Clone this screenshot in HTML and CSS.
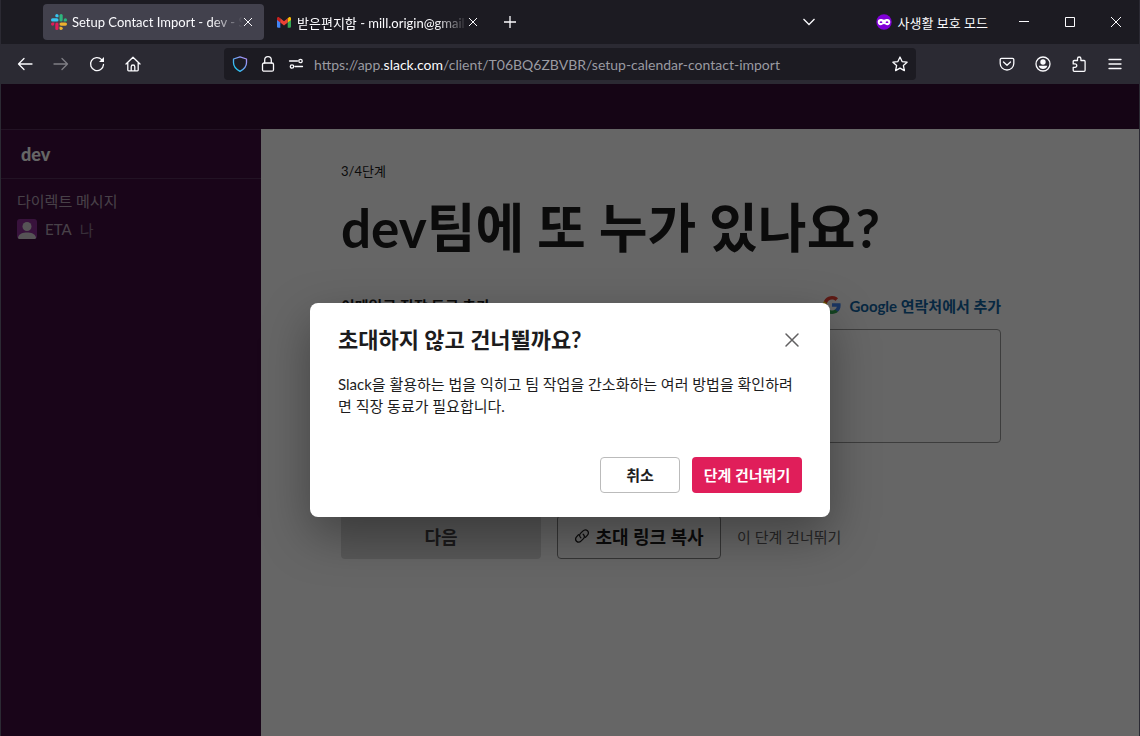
FILE: index.html
```html
<!DOCTYPE html>
<html lang="ko">
<head>
<meta charset="utf-8">
<meta name="viewport" content="width=device-width, initial-scale=1">
<title>Setup Contact Import - dev - Slack</title>
<link rel="stylesheet" href="styles.css">
</head>
<body>
<div class="window">
  <header class="tabbar">
    <div class="tab tab-active">
      <svg class="favicon" viewBox="0 0 16 16" aria-hidden="true">
        <g fill="#36c5f0"><path d="M5.9 0a1.6 1.6 0 0 0 0 3.3h1.6V1.6A1.6 1.6 0 0 0 5.9 0z"/><rect x="0" y="4.3" width="7.5" height="3.2" rx="1.6"/></g>
        <g fill="#2eb67d"><path d="M16 5.9a1.6 1.6 0 0 0-3.3 0v1.6h1.7A1.6 1.6 0 0 0 16 5.9z"/><rect x="8.5" y="0" width="3.2" height="7.5" rx="1.6"/></g>
        <g fill="#ecb22e"><path d="M10.1 16a1.6 1.6 0 0 0 0-3.3H8.5v1.7a1.6 1.6 0 0 0 1.6 1.6z"/><rect x="8.5" y="8.5" width="7.5" height="3.2" rx="1.6"/></g>
        <g fill="#e01e5a"><path d="M0 10.1a1.6 1.6 0 0 0 3.3 0V8.5H1.6A1.6 1.6 0 0 0 0 10.1z"/><rect x="4.3" y="8.5" width="3.2" height="7.5" rx="1.6"/></g>
      </svg>
      <span class="tab-title">Setup Contact Import - dev - S</span>
      <button class="tab-close" aria-label="탭 닫기"><svg viewBox="0 0 10 10"><path d="M1 1l8 8M9 1l-8 8"/></svg></button>
    </div>
    <div class="tab">
      <svg class="favicon gmail" viewBox="0 0 16 16" aria-hidden="true">
        <path fill="#4285f4" d="M1 4v8.5A1.2 1.2 0 0 0 2.2 13.700H4.300V6z"/>
        <path fill="#34a853" d="M15 4v8.500a1.200 1.200 0 0 1-1.200 1.200H11.700V6z"/>
        <path fill="#fbbc04" d="M11.700 4.500l1-1.100c1-.9 2.300-.3 2.300 1V6l-3.300 2.600z"/>
        <path fill="#c5221f" d="M4.300 4.500l-1-1.100C2.300 2.500 1 3.100 1 4.400V6l3.300 2.600z"/>
        <path fill="#ea4335" d="M4.300 4.300L8 7.200l3.700-2.900v4.300L8 11.500 4.300 8.600z"/>
      </svg>
      <span class="tab-title">받은편지함 - mill.origin@gmail</span>
      <button class="tab-close" aria-label="탭 닫기"><svg viewBox="0 0 10 10"><path d="M1 1l8 8M9 1l-8 8"/></svg></button>
    </div>
    <button class="tab-new" aria-label="새 탭"><svg viewBox="0 0 12 12"><path d="M6 0v12M0 6h12"/></svg></button>
    <div class="tabbar-end">
      <button class="tab-list" aria-label="모든 탭 보기"><svg viewBox="0 0 16 16"><path d="M2.500 5l5.500 5.500L13.500 5"/></svg></button>
      <span class="private">
        <svg viewBox="0 0 16 16" aria-hidden="true"><circle cx="8" cy="8" r="7.700" fill="#8000d7"/><path fill="#fff" fill-rule="evenodd" d="M4.700 5C2.900 5 1.700 6.200 1.700 8s1.200 3.200 3 3.200c1.400 0 2.200-1.200 3.300-1.200s1.900 1.200 3.300 1.200c1.800 0 3-1.400 3-3.200s-1.200-3-3-3C10 5 9.200 5.700 8 5.700S6 5 4.700 5zM3.500 8.200c.8-1.400 2.200-1.400 3 0-.8 1.200-2.200 1.200-3 0zm6 0c.8-1.400 2.200-1.400 3 0-.8 1.200-2.200 1.200-3 0z"/></svg>
        사생활 보호 모드
      </span>
      <div class="window-controls">
        <button aria-label="최소화"><svg viewBox="0 0 10 10"><path d="M0 4.500h10"/></svg></button>
        <button aria-label="최대화"><svg viewBox="0 0 10 10"><path d="M.5.5h9v9h-9z"/></svg></button>
        <button aria-label="닫기"><svg viewBox="0 0 10 10"><path d="M0 0l10 10M10 0L0 10"/></svg></button>
      </div>
    </div>
  </header>

  <nav class="toolbar" aria-label="탐색 도구">
    <div class="nav-buttons">
      <button aria-label="뒤로"><svg viewBox="0 0 16 16"><path d="M15 8H1.500M7 2.500L1.500 8 7 13.500"/></svg></button>
      <button class="dim" aria-label="앞으로"><svg viewBox="0 0 16 16"><path d="M1 8h13.500M9 2.500L14.500 8 9 13.500"/></svg></button>
      <button aria-label="새로 고침"><svg viewBox="0 0 16 16"><path d="M14.500 8.500A6.500 6.500 0 1 1 12.700 3.600"/><path class="solid" d="M15 1v5h-5z"/></svg></button>
      <button aria-label="홈"><svg viewBox="0 0 16 16"><path d="M1 8l7-6.800L15 8M2.800 6.700V14a.8.800 0 0 0 .8.800h8.800a.8.800 0 0 0 .8-.8V6.700M6.200 14.800v-4a1.800 1.800 0 0 1 3.600 0v4"/></svg></button>
    </div>
    <div class="urlbar">
      <svg class="shield" viewBox="0 0 16 16" aria-hidden="true"><defs><linearGradient id="shield-tint" x1="0" y1="1" x2="1" y2="0"><stop offset="0" stop-color="#00d5ef"/><stop offset=".5" stop-color="#6ba5f5"/><stop offset="1" stop-color="#b58ef8"/></linearGradient></defs><path stroke="url(#shield-tint)" d="M8 .8L14.500 3v3.800c0 4-2.500 6.500-6.500 8.600C4 13.300 1.500 10.800 1.500 6.800V3z"/></svg>
      <svg viewBox="0 0 16 16" aria-hidden="true"><rect x="2.500" y="7" width="11" height="8.200" rx="1.500"/><path d="M4.700 7V4a3.300 3.300 0 0 1 6.600 0v3"/></svg>
      <svg viewBox="0 0 16 16" aria-hidden="true"><path d="M1.500 5H9.500M7 10.500h7.500"/><circle cx="12.500" cy="5" r="1.700"/><circle cx="4" cy="10.500" r="1.700"/></svg>
      <a class="url" href="#">https://app.<b>slack.com</b>/client/T06BQ6ZBVBR/setup-calendar-contact-import</a>
      <button aria-label="북마크 추가"><svg viewBox="0 0 16 16"><path d="M8 1l2.100 4.600 5 .6-3.700 3.400 1 5L8 12.100l-4.400 2.500 1-5L.9 6.200l5-.6z"/></svg></button>
    </div>
    <div class="tool-buttons">
      <button aria-label="Pocket"><svg viewBox="0 0 16 16"><path d="M2.500 2.300h11a1.300 1.300 0 0 1 1.300 1.300V7.500a6.800 6.500 0 0 1-13.600 0V3.600a1.300 1.300 0 0 1 1.300-1.300zM4.500 6L8 9.300 11.500 6"/></svg></button>
      <button aria-label="계정"><svg viewBox="0 0 16 16"><circle cx="8" cy="8" r="7"/><circle class="solid" cx="8" cy="6" r="2.700"/><path class="solid" d="M3.700 9.800h8.600C11.800 12 10 13 8 13s-3.800-1-4.300-3.200z"/></svg></button>
      <button aria-label="확장 기능"><svg viewBox="0 0 16 16"><path d="M6.500 4.500V2.700a1.700 1.700 0 0 1 3.400 0v1.800h3.200a1 1 0 0 1 1 1v8.800a1 1 0 0 1-1 1H3.200a1 1 0 0 1-1-1v-3h1.900a1.700 1.700 0 0 0 0-3.400H2.200v-2.400a1 1 0 0 1 1-1z"/></svg></button>
      <button aria-label="메뉴"><svg viewBox="0 0 16 16"><path d="M2 3.500h12M2 8h12M2 12.500h12"/></svg></button>
    </div>
  </nav>

  <div class="client">
    <div class="client-top"></div>
    <aside class="sidebar">
      <div class="workspace">dev</div>
      <div class="dm-heading">다이렉트 메시지</div>
      <a class="dm" href="#">
        <svg viewBox="0 0 20 20" aria-hidden="true"><rect width="20" height="20" rx="3" fill="#8d2f96"/><circle cx="10" cy="7.500" r="4.500" fill="#d6d3d6"/><path fill="#d6d3d6" d="M1 18.500C2 14.500 6 13.500 10 13.500s8 1 9 5c0 1-1 1.500-2 1.500H3c-1 0-2-.5-2-1.500z"/></svg>
        <span>ETA</span><span class="me">나</span>
      </a>
    </aside>
    <main class="setup">
      <p class="step">3/4단계</p>
      <h1>dev팀에 또 누가 있나요?</h1>
      <form class="invite">
        <div class="field-head">
          <label for="emails">이메일로 직장 동료 추가</label>
          <a class="google" href="#">
            <svg viewBox="0 0 18 18" aria-hidden="true"><path fill="#4285f4" d="M17.640 9.200c0-.64-.06-1.250-.16-1.840H9v3.480h4.840a4.140 4.140 0 0 1-1.800 2.720v2.260h2.920c1.700-1.570 2.680-3.880 2.680-6.620z"/><path fill="#34a853" d="M9 18c2.430 0 4.470-.8 5.960-2.180l-2.920-2.260c-.8.540-1.840.860-3.040.860-2.340 0-4.330-1.580-5.040-3.710H.96v2.330A9 9 0 0 0 9 18z"/><path fill="#fbbc05" d="M3.960 10.710a5.400 5.400 0 0 1 0-3.420V4.960H.96a9 9 0 0 0 0 8.080z"/><path fill="#ea4335" d="M9 3.580c1.320 0 2.510.45 3.440 1.350l2.580-2.590A9 9 0 0 0 .96 4.960l3 2.330C4.670 5.160 6.660 3.580 9 3.580z"/></svg>
            Google 연락처에서 추가
          </a>
        </div>
        <textarea id="emails"></textarea>
        <div class="actions">
          <button class="next" type="button">다음</button>
          <button class="copy" type="button"><svg viewBox="0 0 16 16" aria-hidden="true"><path d="M6.800 9.700C5.300 8.300 5.200 6.700 6.500 5.400l2.300-2.300c1.500-1.500 3.400-1.500 4.700-.3s1.200 3.200-.2 4.600L11.500 9.200"/><path d="M9.200 6.300c1.500 1.400 1.600 3 .3 4.300l-2.300 2.300c-1.500 1.500-3.400 1.500-4.700.3s-1.200-3.200.2-4.600L4.500 6.800"/></svg>초대 링크 복사</button>
          <a class="skip" href="#">이 단계 건너뛰기</a>
        </div>
      </form>
    </main>

    <div class="overlay">
      <section class="modal" role="dialog" aria-modal="true" aria-labelledby="modal-title">
        <div class="modal-head">
          <h2 id="modal-title">초대하지 않고 건너뛸까요?</h2>
          <button aria-label="닫기"><svg viewBox="0 0 16 16"><path d="M2 2l12 12M14 2L2 14"/></svg></button>
        </div>
        <p>Slack을 활용하는 법을 익히고 팀 작업을 간소화하는 여러 방법을 확인하려면 직장 동료가 필요합니다.</p>
        <div class="modal-actions">
          <button class="cancel">취소</button>
          <button class="confirm">단계 건너뛰기</button>
        </div>
      </section>
    </div>
  </div>
</div>
</body>
</html>
```
FILE: styles.css
```css
* { box-sizing: border-box; }
body {
  margin: 0;
  font-family: Lato, "Noto Sans CJK KR", sans-serif;
  color: #1d1c1d;
}
button {
  margin: 0;
  padding: 0;
  border: 0;
  background: none;
  color: inherit;
  font: inherit;
  cursor: pointer;
}
a { color: inherit; text-decoration: none; }
h1, h2, p { margin: 0; }
svg { display: block; flex: none; }

.window {
  min-height: 100vh;
  display: flex;
  flex-direction: column;
  border: solid #2b2a33;
  border-width: 0 1px;
}

/* Tab strip */
.tabbar {
  display: flex;
  align-items: center;
  height: 44px;
  padding-left: 42px;
  background: #1c1b22;
  color: #fbfbfe;
  font-size: 13px;
}
.tabbar button svg, .toolbar svg {
  fill: none;
  stroke: currentColor;
}
.tab {
  display: flex;
  align-items: center;
  width: 221px;
  height: 36px;
  padding: 0 11px 0 8px;
  border-radius: 4px;
}
.tab + .tab { margin-left: 4px; }
.tab-active { background: #42414d; }
.favicon { width: 16px; height: 16px; }
.tab-title {
  flex: 1;
  min-width: 0;
  margin-left: 5px;
  overflow: hidden;
  white-space: nowrap;
  mask-image: linear-gradient(to left, transparent, #000 32px);
}
.tab-close svg { width: 10px; height: 10px; }
.tab-new { margin-left: 15px; }
.tab-new svg { width: 12px; height: 12px; stroke-width: 1.3; }
.tabbar-end {
  display: flex;
  align-items: center;
  margin-left: auto;
}
.tab-list svg { width: 16px; height: 16px; stroke-width: 1.3; }
.private {
  display: flex;
  align-items: center;
  gap: 6px;
  margin: 0 13px 0 59px;
}
.private svg { width: 16px; height: 16px; }
.window-controls { display: flex; }
.window-controls button {
  display: grid;
  place-items: center;
  width: 46px;
  height: 30px;
}
.window-controls svg { width: 10px; height: 10px; overflow: visible; }

/* Navigation toolbar */
.toolbar {
  display: flex;
  align-items: center;
  height: 40px;
  padding: 0 16px;
  background: #2b2a33;
  color: #fbfbfe;
}
.toolbar svg { width: 16px; height: 16px; stroke-width: 1.3; stroke-linecap: round; stroke-linejoin: round; }
.toolbar .solid { fill: currentColor; stroke: none; }
.nav-buttons, .tool-buttons { display: flex; gap: 20px; }
.dim { opacity: 0.4; }
.urlbar {
  flex: 1;
  display: flex;
  align-items: center;
  gap: 12px;
  height: 32px;
  margin: 0 83px;
  padding: 0 8px;
  border-radius: 4px;
  background: #1c1b22;
}
.url {
  flex: 1;
  min-width: 0;
  margin-left: -2px;
  overflow: hidden;
  white-space: nowrap;
  color: #9a9aa1;
  font-size: 14px;
}
.url b { color: #fbfbfe; font-weight: 400; }

/* Slack client */
.client {
  position: relative;
  flex: 1;
  display: grid;
  grid-template: 45px 1fr / 260px 1fr;
  background: #fff;
}
.client-top { grid-column: 1 / -1; background: #350d36; }
.sidebar { background: #3f0e40; color: #b5a3b5; font-size: 15px; }
.workspace {
  height: 50px;
  padding-left: 20px;
  border: solid #56305a;
  border-width: 1px 0;
  color: #fff;
  font-size: 18px;
  font-weight: 900;
  line-height: 48px;
}
.dm-heading { padding: 11px 16px 0; line-height: 22px; }
.dm {
  display: flex;
  align-items: center;
  gap: 8px;
  height: 34px;
  padding: 0 16px;
}
.dm svg { width: 20px; height: 20px; }
.me { color: #8d768e; }

.setup { padding: 32px 80px; }
.step { font-size: 13px; line-height: 20px; }
h1 {
  margin-top: 17px;
  font-size: 53px;
  font-weight: 700;
  line-height: 60px;
}
.invite { max-width: 660px; margin-top: 35px; }
.field-head {
  display: flex;
  align-items: center;
  justify-content: space-between;
  height: 24px;
  font-size: 15px;
  font-weight: 700;
}
.google { display: flex; align-items: center; gap: 8px; color: #1264a3; }
.google svg { width: 18px; height: 18px; }
textarea {
  display: block;
  width: 100%;
  height: 114px;
  margin-top: 12px;
  border: 1px solid #999;
  border-radius: 4px;
  background: #fff;
  resize: none;
}
.actions {
  display: flex;
  align-items: center;
  gap: 16px;
  margin-top: 72px;
}
.actions button { height: 44px; padding-bottom: 2px; border-radius: 4px; font-size: 18px; }
.actions .next { width: 200px; background: #ddd; color: #454245; font-weight: 700; }
.actions .copy {
  display: flex;
  align-items: center;
  justify-content: center;
  gap: 5px;
  width: 164px;
  border: 1px solid #868686;
  font-weight: 700;
}
.copy svg { width: 16px; height: 16px; fill: none; stroke: currentColor; stroke-width: 1.3; stroke-linecap: round; }
.skip { padding-bottom: 2px; color: #616061; font-size: 15px; }

/* Confirmation dialog */
.overlay {
  position: absolute;
  inset: 0;
  display: grid;
  place-items: center;
  background: rgba(0, 0, 0, 0.6);
}
.modal {
  width: 100%;
  max-width: 520px;
  padding: 20px 28px 24px;
  border-radius: 8px;
  background: #fff;
  box-shadow: 0 18px 48px rgba(0, 0, 0, 0.35);
}
.modal-head {
  display: flex;
  align-items: center;
  justify-content: space-between;
  height: 34px;
}
h2 { font-size: 22px; font-weight: 700; line-height: 30px; }
.modal-head button { padding: 2px; color: #616061; }
.modal-head svg { width: 16px; height: 16px; fill: none; stroke: currentColor; stroke-width: 1.5; stroke-linecap: round; }
.modal p { margin-top: 16px; font-size: 15px; line-height: 22px; }
.modal-actions {
  display: flex;
  justify-content: flex-end;
  gap: 12px;
  margin-top: 40px;
}
.modal-actions button { height: 36px; padding-bottom: 2px; border-radius: 4px; font-size: 15px; font-weight: 700; }
.modal-actions .cancel { width: 80px; border: 1px solid #bbb; }
.modal-actions .confirm { width: 110px; background: #e01e5a; color: #fff; }
```
